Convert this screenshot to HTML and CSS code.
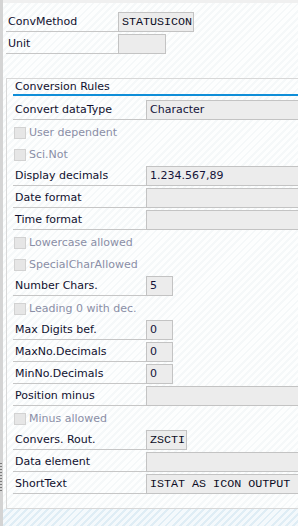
FILE: index.html
```html
<!DOCTYPE html>
<html lang="en">
<head>
    <meta charset="UTF-8">
    <meta name="viewport" content="width=device-width, initial-scale=1.0">
    <title>Conversion Rules</title>
    <link rel="stylesheet" href="styles.css">
</head>
<body>
    <div class="frame">
        <div class="sash"><div class="grip"></div></div>
        <div class="screen">
            <div class="head">
                <div class="row">
                    <span class="lbl lbl-head">ConvMethod</span>
                    <span class="fld mono w-76">STATUSICON</span>
                </div>
                <div class="row">
                    <span class="lbl lbl-head">Unit</span>
                    <span class="fld w-48"></span>
                </div>
            </div>

            <div class="group">
                <div class="group-title">Conversion Rules</div>
                <div class="rows">
                    <div class="row"><span class="lbl">Convert dataType</span><span class="fld wide">Character</span></div>
                    <div class="row chk"><span class="box"></span>User dependent</div>
                    <div class="row chk"><span class="box"></span>Sci.Not</div>
                    <div class="row"><span class="lbl">Display decimals</span><span class="fld wide">1.234.567,89</span></div>
                    <div class="row"><span class="lbl">Date format</span><span class="fld wide"></span></div>
                    <div class="row"><span class="lbl">Time format</span><span class="fld wide"></span></div>
                    <div class="row chk"><span class="box"></span>Lowercase allowed</div>
                    <div class="row chk"><span class="box"></span>SpecialCharAllowed</div>
                    <div class="row"><span class="lbl">Number Chars.</span><span class="fld w-27">5</span></div>
                    <div class="row chk"><span class="box"></span>Leading 0 with dec.</div>
                    <div class="row"><span class="lbl">Max Digits bef.</span><span class="fld w-27">0</span></div>
                    <div class="row"><span class="lbl">MaxNo.Decimals</span><span class="fld w-27">0</span></div>
                    <div class="row"><span class="lbl">MinNo.Decimals</span><span class="fld w-27">0</span></div>
                    <div class="row"><span class="lbl">Position minus</span><span class="fld wide"></span></div>
                    <div class="row chk"><span class="box"></span>Minus allowed</div>
                    <div class="row"><span class="lbl">Convers. Rout.</span><span class="fld mono w-41">ZSCTI</span></div>
                    <div class="row"><span class="lbl">Data element</span><span class="fld wide"></span></div>
                    <div class="row"><span class="lbl">ShortText</span><span class="fld mono wide">ISTAT AS ICON OUTPUT</span></div>
                </div>
            </div>
        </div>
    </div>
</body>
</html>
```

FILE: styles.css
```css
body {
    margin: 0;
    width: 298px;
    height: 526px;
    overflow: hidden;
    font-family: "DejaVu Sans", Tahoma, sans-serif;
    font-size: 11px;
    color: #10102e;
    background: repeating-linear-gradient(135deg, #f4f9fc 0, #f4f9fc 3px, #dfedf5 3px, #dfedf5 5px);
}
.frame {
    display: flex;
    height: 526px;
}
.sash {
    width: 3px;
    flex-shrink: 0;
    background: #d4d4d4;
    position: relative;
}
.grip {
    position: absolute;
    left: 0;
    top: 463px;
    width: 2px;
    height: 29px;
    background: repeating-linear-gradient(180deg, #7a7a7a 0, #7a7a7a 1px, transparent 1px, transparent 3px);
}
.screen {
    flex: 1;
    min-width: 0;
    align-self: flex-start;
    border-top: 3px solid #f0f0f0;
    background: repeating-linear-gradient(135deg, #fdfefe 0, #fdfefe 3px, #f5f8f9 3px, #f5f8f9 5px);
}
.head {
    padding: 9px 0 0 3px;
    display: flex;
    flex-direction: column;
    gap: 2px;
}
.row {
    display: flex;
    height: 20px;
    align-items: stretch;
}
.lbl {
    box-sizing: border-box;
    width: 133px;
    flex-shrink: 0;
    height: 20px;
    line-height: 19px;
    padding-left: 2px;
    border-bottom: 1px solid #c6c6c6;
    white-space: nowrap;
}
.lbl-head {
    width: 112px;
}
.fld {
    box-sizing: border-box;
    height: 20px;
    line-height: 18px;
    padding-left: 3px;
    background: #ececec;
    border: 1px solid #c3c3c3;
    white-space: nowrap;
    overflow: hidden;
    color: #14143a;
}
.mono {
    font-family: "Liberation Mono", "Courier New", monospace;
    font-size: 11.7px;
    color: #0c0c24;
}
.wide {
    flex: 1;
    min-width: 0;
    border-right: none;
}
.w-76 { width: 76px; }
.w-48 { width: 48px; }
.w-27 { width: 27px; }
.w-41 { width: 41px; }

.group {
    margin: 24px 0 0 3px;
    border: 1px solid #d8d8d8;
    border-right: none;
    padding-bottom: 14px;
}
.group-title {
    margin-left: 6px;
    padding-left: 2px;
    height: 15px;
    line-height: 15px;
    border-bottom: 2px solid #0f8ed8;
}
.rows {
    margin: 4px 0 0 6px;
    display: flex;
    flex-direction: column;
    gap: 2px;
}
.chk {
    align-items: center;
    color: #8a8ea6;
    padding-left: 1px;
}
.box {
    box-sizing: border-box;
    width: 12px;
    height: 12px;
    margin: 1px 3px 0 0;
    background: #e6e6e6;
    border: 1px solid #d2d2d2;
}
```
